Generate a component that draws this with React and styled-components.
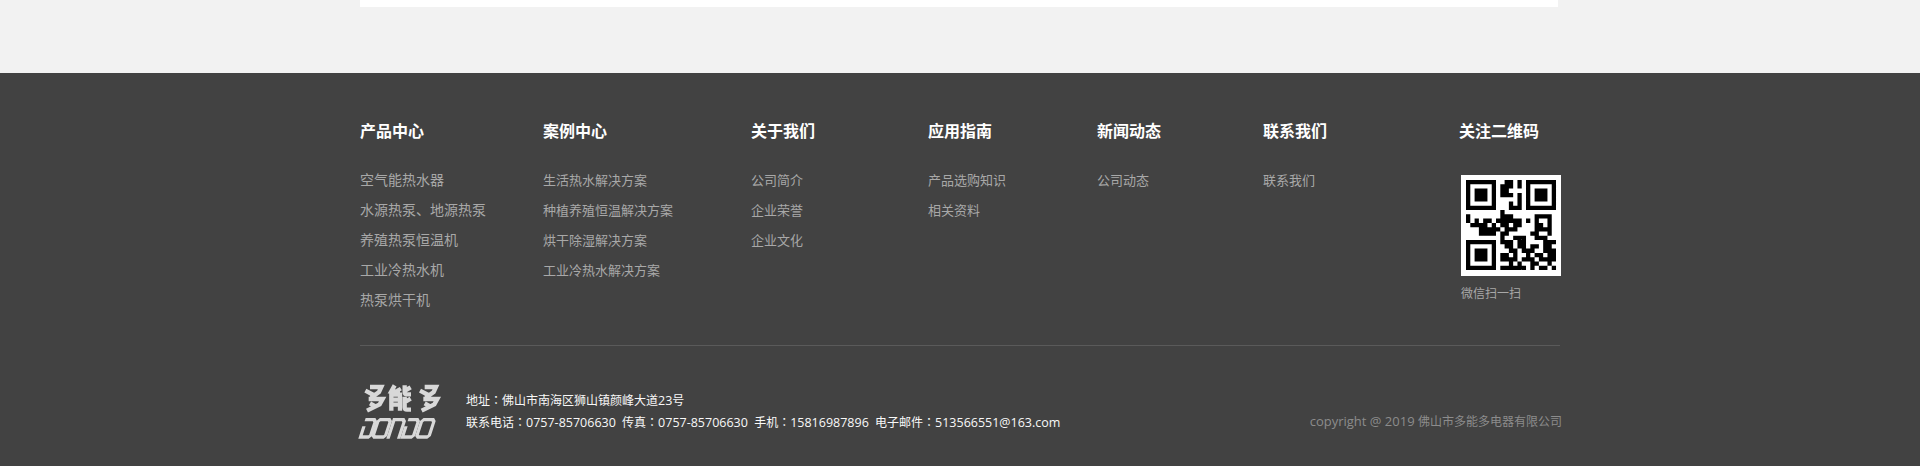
import React from "react";
import styled, { createGlobalStyle } from "styled-components";

const columns = [
  { title: "产品中心", width: 183, size: 14, links: ["空气能热水器", "水源热泵、地源热泵", "养殖热泵恒温机", "工业冷热水机", "热泵烘干机"] },
  { title: "案例中心", width: 208, size: 13, links: ["生活热水解决方案", "种植养殖恒温解决方案", "烘干除湿解决方案", "工业冷热水解决方案"] },
  { title: "关于我们", width: 177, size: 13, links: ["公司简介", "企业荣誉", "企业文化"] },
  { title: "应用指南", width: 169, size: 13, links: ["产品选购知识", "相关资料"] },
  { title: "新闻动态", width: 166, size: 13, links: ["公司动态"] },
  { title: "联系我们", width: 196, size: 13, links: ["联系我们"] },
];

const qrRows = [
  "111111100110101111111",
  "100000101110101000001",
  "101110101100001011101",
  "101110101110101011101",
  "101110100000101011101",
  "100000100010101000001",
  "111111100011101111111",
  "000000001000000000000",
  "100000001110000011110",
  "101011011111101010010",
  "011110101101100011010",
  "000111110111000011110",
  "000111101100000110010",
  "000000001001110011100",
  "111111101110110000111",
  "100000100110110110110",
  "101110100011011100111",
  "101110101101001011011",
  "101110101111011101111",
  "100000100010100110010",
  "111111101111110101101",
];

// merge all cells in one path so no seams show between neighbours
const qrPath = qrRows
  .map((row, y) =>
    row
      .split("")
      .map((cell, x) => (cell === "1" ? `M${x} ${y}h1v1h-1z` : ""))
      .join("")
  )
  .join("");

const GlobalStyle = createGlobalStyle`
  html, body {
    margin: 0;
    padding: 0;
    background: #f2f2f2;
  }
  body {
    font-family: "Open Sans", "Noto Sans CJK SC", sans-serif;
  }
`;

const Page = styled.div`
  width: 1920px;
  height: 466px;
  overflow: hidden;
  display: flex;
  flex-direction: column;
`;

const TopArea = styled.div`
  height: 73px;
  flex: none;
`;

const WhiteCard = styled.div`
  width: 1198px;
  height: 7px;
  margin-left: 360px;
  background: #fff;
`;

const Footer = styled.footer`
  flex: 1;
  background: #424242;
  padding: 48px 0 0 360px;
`;

const Inner = styled.div`
  width: 1200px;
`;

const Columns = styled.div`
  display: flex;
  height: 224px;
  border-bottom: 1px solid #5a5a5a;
`;

const Column = styled.div`
  width: ${(p) => p.$width}px;
  flex: none;
`;

const Title = styled.h3`
  margin: 0 0 23px;
  font-family: "Liberation Sans", "Noto Sans CJK SC", sans-serif;
  font-size: 16px;
  line-height: 21px;
  font-weight: 700;
  color: #fff;
`;

const LinkList = styled.ul`
  list-style: none;
  margin: 0;
  padding: 0;
`;

const LinkItem = styled.li`
  font-size: ${(p) => p.$size}px;
  line-height: 30px;
  color: #a8a8a8;
`;

const QrColumn = styled.div`
  flex: none;
`;

const QrBox = styled.div`
  width: 100px;
  height: 101px;
  margin: 33px 0 0 2px;
  background: #fff;
`;

const QrSvg = styled.svg`
  display: block;
`;

const QrCaption = styled.div`
  margin: 8px 0 0 2px;
  font-size: 12px;
  line-height: 19px;
  color: #a8a8a8;
`;

const Bottom = styled.div`
  display: flex;
  align-items: flex-start;
  padding-top: 32px;
`;

const Logo = styled.svg`
  flex: none;
  margin-left: -10px;
`;

const Contact = styled.div`
  margin: 11px 0 0 16px;
  font-size: 12px;
  line-height: 21px;
  color: #f8f8f8;
  white-space: pre;
`;

const Colon = styled.span`
  font-family: "Noto Sans CJK JP", sans-serif;
`;

const Latin = styled.span`
  font-size: 12.5px;
`;

const Copyright = styled.div`
  margin: 33px -2px 0 auto;
  font-size: 13px;
  line-height: 20px;
  color: #8c8c8c;
`;

const CopyrightName = styled.span`
  font-size: 12px;
`;

const QrCode = () => (
  <QrSvg width="100" height="101" viewBox="-1.17 -1.17 23.33 23.56">
    <path d={qrPath} fill="#000" />
  </QrSvg>
);

const duo = "M60 27h34l-7 15-24 17M46 38l25 13M56 63h42l-9 16-38 19M60 76l18 10";

const DondoLogo = () => (
  <Logo width="100" height="66" viewBox="0 0 300 198" fill="none" stroke="#d8d8d8">
    <g strokeWidth="13">
      <path d={duo} />
      <path d={duo} transform="translate(164 0)" />
      <path d="M134 22l-10 18h26M144 30l6 10M124 98V50h26v48M124 65h26M124 80h26M164 22v20c0 5 2 7 7 7h12M182 28l-14 8M164 56v32c0 5 2 7 7 7h12M182 62l-14 8" />
    </g>
    <g strokeWidth="10" transform="skewX(-18)">
      <path d="M86 125h27l5 6v41l-5 5H89v-32" />
      <path d="M131 125h27l5 6v41l-5 5h-27l-5-5v-41z" />
      <path d="M173 182v-57h27l5 6v51" />
      <path d="M215 125h27l5 6v41l-5 5h-27v-32" />
      <path d="M262 125h27l5 6v41l-5 5h-27l-5-5v-41z" />
    </g>
  </Logo>
);

export default function App() {
  return (
    <>
      <GlobalStyle />
      <Page>
        <TopArea>
          <WhiteCard />
        </TopArea>
        <Footer>
          <Inner>
            <Columns>
              {columns.map((col) => (
                <Column key={col.title} $width={col.width}>
                  <Title>{col.title}</Title>
                  <LinkList>
                    {col.links.map((link) => (
                      <LinkItem key={link} $size={col.size}>{link}</LinkItem>
                    ))}
                  </LinkList>
                </Column>
              ))}
              <QrColumn>
                <Title>关注二维码</Title>
                <QrBox>
                  <QrCode />
                </QrBox>
                <QrCaption>微信扫一扫</QrCaption>
              </QrColumn>
            </Columns>
            <Bottom>
              <DondoLogo />
              <Contact>
                地址<Colon>：</Colon>佛山市南海区狮山镇颜峰大道<Latin>23</Latin>号{"\n"}
                联系电话<Colon>：</Colon><Latin>0757-85706630</Latin>{"  "}传真<Colon>：</Colon><Latin>0757-85706630</Latin>{"  "}手机<Colon>：</Colon><Latin>15816987896</Latin>{"  "}电子邮件<Colon>：</Colon><Latin>513566551@163.com</Latin>
              </Contact>
              <Copyright>
                copyright @ 2019 <CopyrightName>佛山市多能多电器有限公司</CopyrightName>
              </Copyright>
            </Bottom>
          </Inner>
        </Footer>
      </Page>
    </>
  );
}
